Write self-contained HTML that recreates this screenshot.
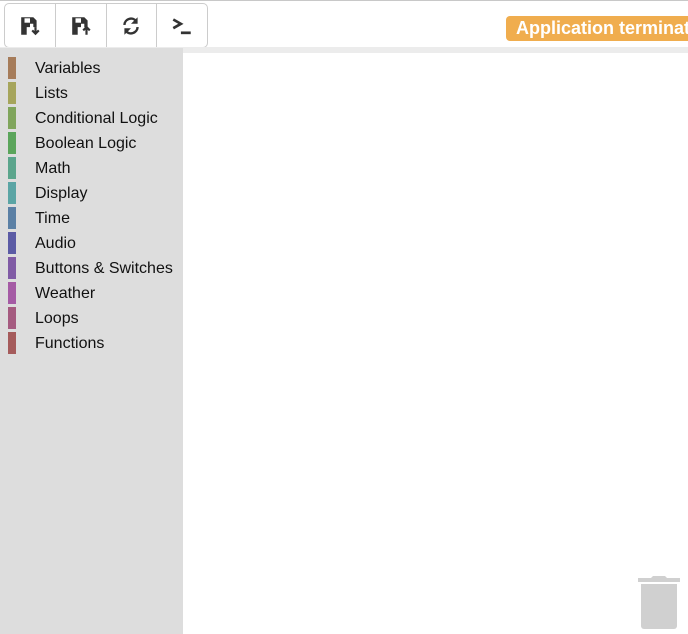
<!DOCTYPE html>
<html><head><style>
body{margin:0;width:688px;height:634px;overflow:hidden;background:#fff;font-family:"Liberation Sans",sans-serif;position:relative}
.top{position:absolute;left:0;top:0;width:688px;height:1px;background:#c8c8c8}
.tb{position:absolute;left:4px;top:3px;width:202px;height:43px;border:1px solid #ccc;border-radius:5px;display:flex;background:#fff}
.tb div{flex:1;border-right:1px solid #ccc;display:flex;align-items:center;justify-content:center}
.tb div:last-child{border-right:none}
.band{position:absolute;left:0;top:47px;width:688px;height:6px;background:#ececec}
.side{position:absolute;left:0;top:48px;width:183px;height:586px;background:#dddddd}
.it{position:absolute;left:8px;height:22px;width:175px}
.it i{position:absolute;left:0;top:0;width:8px;height:22px}
.it span{position:absolute;left:27px;top:2px;font-size:16px;color:#111}
.badge{position:absolute;left:506px;top:16px;width:220px;height:25px;background:#f0ad4e;border-radius:4px;color:#fff;font-weight:bold;font-size:18px;line-height:25px;padding-left:10px;box-sizing:border-box;white-space:nowrap}
</style></head><body>
<div class="top"></div>
<div class="tb">
<div><svg width="22" height="22" viewBox="0 0 20 20"><path d="M2 2h11l3 3v6h-3v-3h-3v3h-3v7H2z" fill="#333"/><rect x="5" y="3" width="5" height="4" fill="#fff"/><path d="M15 11v6M12 14l3 3 3-3" stroke="#333" stroke-width="2" fill="none"/></svg></div>
<div><svg width="22" height="22" viewBox="0 0 20 20"><path d="M2 2h11l3 3v6h-3v-3h-3v3h-3v7H2z" fill="#333"/><rect x="5" y="3" width="5" height="4" fill="#fff"/><path d="M15 18v-7M12 14l3-3 3 3" stroke="#333" stroke-width="2" fill="none"/></svg></div>
<div><svg width="22" height="22" viewBox="0 0 20 20"><path d="M4 9a6 6 0 0 1 11-3M16 11a6 6 0 0 1-11 3" stroke="#333" stroke-width="2.2" fill="none"/><path d="M16 2v6h-6zM4 18v-6h6z" fill="#333"/></svg></div>
<div><svg width="24" height="22" viewBox="0 0 22 20"><path d="M3 4l7 4-7 4" stroke="#333" stroke-width="2.4" fill="none"/><rect x="10" y="15" width="9" height="2.5" fill="#333"/></svg></div>
</div>
<div class="band"></div>
<div class="side">
<div class="it" style="top:9px"><i style="background:#a67c5a"></i><span style="top:3px">Variables</span></div>
<div class="it" style="top:34px"><i style="background:#a6a55c"></i><span style="top:3px">Lists</span></div>
<div class="it" style="top:59px"><i style="background:#80a55c"></i><span style="top:3px">Conditional Logic</span></div>
<div class="it" style="top:84px"><i style="background:#5ba55b"></i><span style="top:3px">Boolean Logic</span></div>
<div class="it" style="top:109px"><i style="background:#5ba58c"></i><span style="top:3px">Math</span></div>
<div class="it" style="top:134px"><i style="background:#5ba5a5"></i><span style="top:3px">Display</span></div>
<div class="it" style="top:159px"><i style="background:#5b80a5"></i><span style="top:3px">Time</span></div>
<div class="it" style="top:184px"><i style="background:#5b5ba5"></i><span style="top:3px">Audio</span></div>
<div class="it" style="top:209px"><i style="background:#805ba5"></i><span style="top:3px">Buttons &amp; Switches</span></div>
<div class="it" style="top:234px"><i style="background:#a55ba5"></i><span style="top:3px">Weather</span></div>
<div class="it" style="top:259px"><i style="background:#a55b80"></i><span style="top:3px">Loops</span></div>
<div class="it" style="top:284px"><i style="background:#a55b5b"></i><span style="top:3px">Functions</span></div>
</div>
<div class="badge">Application terminated</div>
<svg style="position:absolute;left:636px;top:574px" width="46" height="60" viewBox="0 0 46 60"><path d="M2 4h13l2-2h12l2 2h13v4H2z" fill="#d0d0d0"/><path d="M5 10h36v42a3 3 0 0 1-3 3H8a3 3 0 0 1-3-3z" fill="#d0d0d0"/></svg>
</body></html>
